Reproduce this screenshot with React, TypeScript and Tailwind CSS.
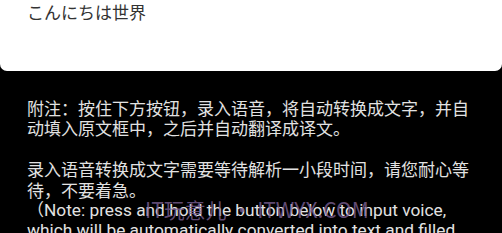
export default function App() {
  return (
    <div className="relative h-[233px] w-[502px] overflow-hidden bg-black [font-family:'Noto_Sans_CJK_SC',sans-serif]">
      {/* Source text box */}
      <div className="h-[71px] rounded-b-[7px] bg-white px-[27px] pt-[1px]">
        <p className="text-[17px] leading-[22px] text-[#333] [font-family:'Noto_Sans_CJK_JP',sans-serif]">
          こんにちは世界
        </p>
      </div>

      {/* Notes */}
      <div className="whitespace-nowrap px-[27px] pt-[27px] text-[17px] leading-[20.4px] text-[#e2e2e2]">
        <p>附注：按住下方按钮，录入语音，将自动转换成文字，并自</p>
        <p>动填入原文框中，之后并自动翻译成译文。</p>
        <p className="mt-[20.4px]">录入语音转换成文字需要等待解析一小段时间，请您耐心等</p>
        <p>待，不要着急。</p>
        <p className="-mt-[1px]">
          （<span className="text-[17.3px] [font-family:Roboto,'Noto_Sans_CJK_SC',sans-serif]">Note: press and hold the button below to input voice,</span>
        </p>
        <p className="text-[17.3px] [font-family:Roboto,'Noto_Sans_CJK_SC',sans-serif]">
          which will be automatically converted into text and filled
        </p>
      </div>

      {/* Watermark */}
      <div className="absolute left-[145px] top-[198px] whitespace-nowrap text-[21px] leading-[22px] text-[#7a5f92]/80 [font-family:'Liberation_Sans_Narrow','Noto_Sans_CJK_SC',sans-serif]">
        IT玩意儿 • ITWYX.COM
      </div>
    </div>
  )
}
